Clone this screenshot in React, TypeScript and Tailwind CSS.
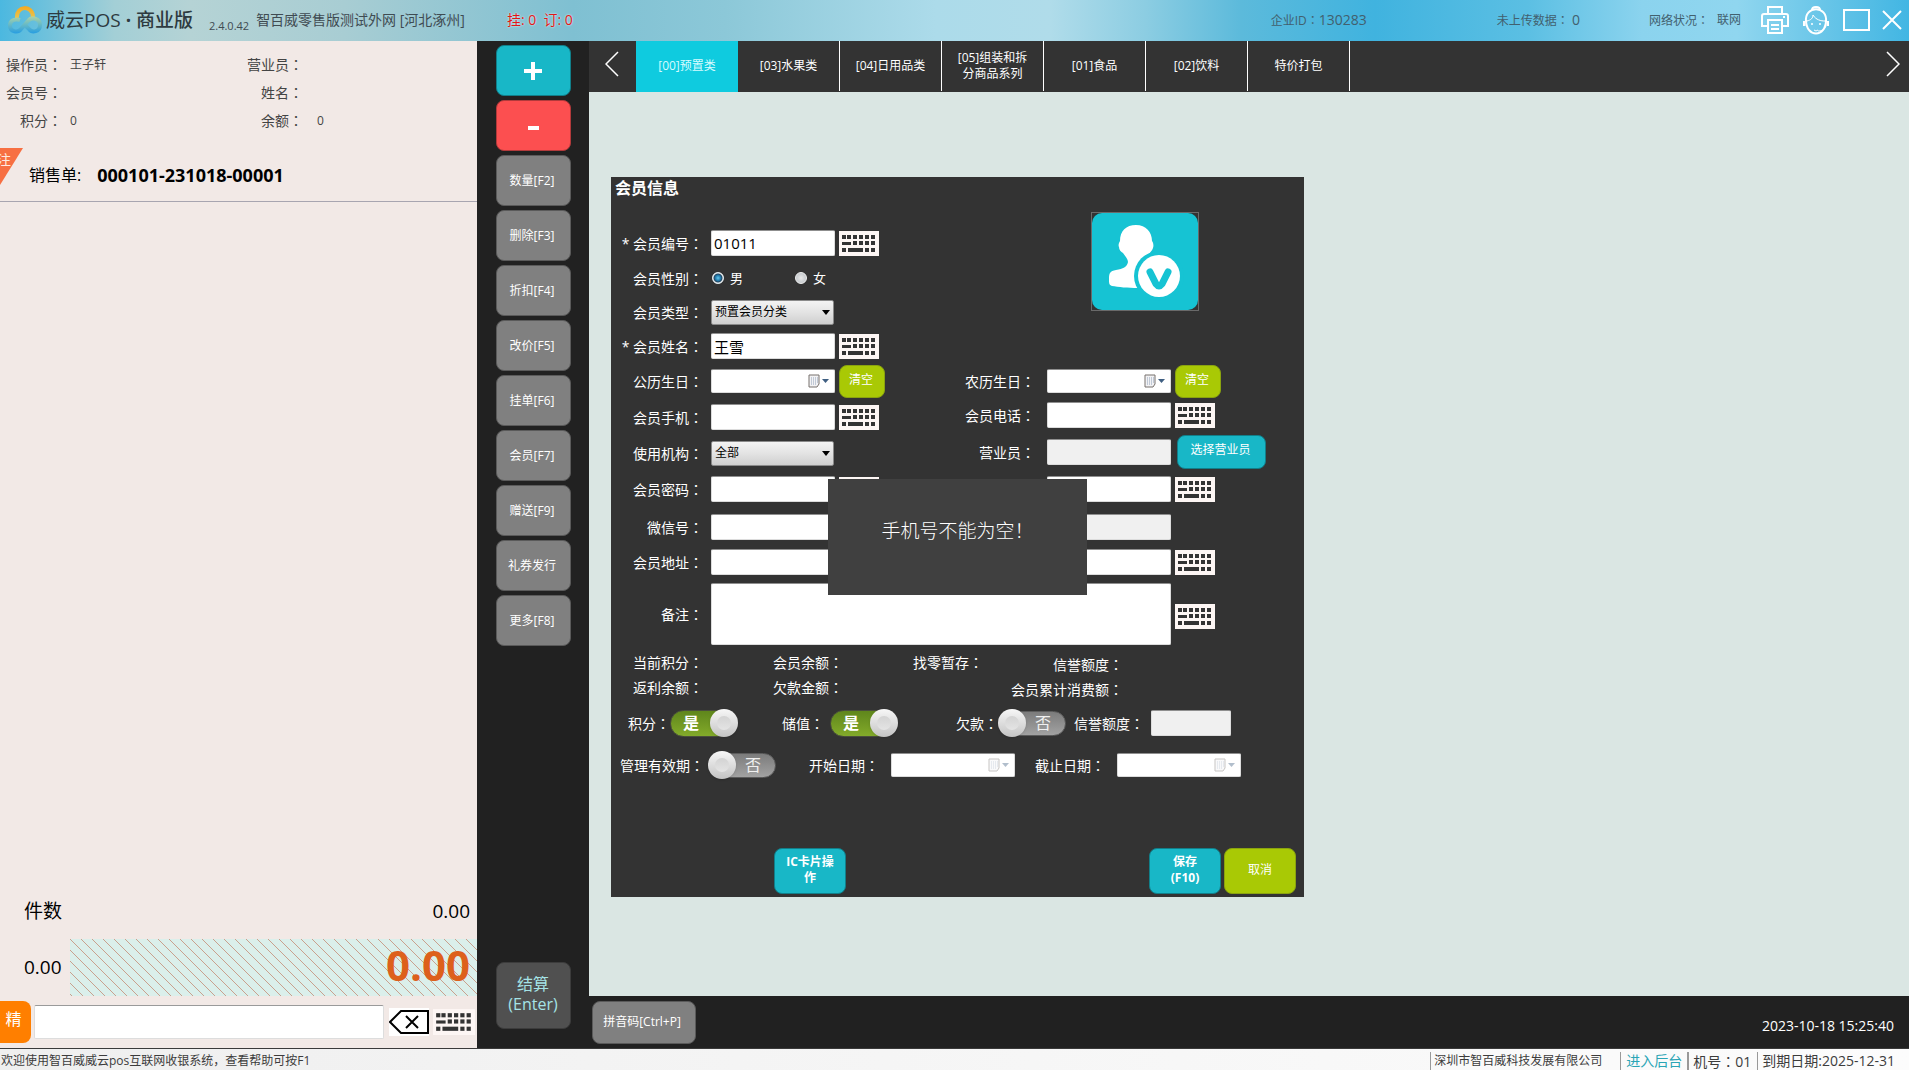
import type { ReactNode } from 'react';

function Colon() {
  return <span className="font-['Noto_Sans_CJK_TC','Noto_Sans_CJK_SC',sans-serif]">：</span>;
}

function KeyboardIcon({ className = '' }: { className?: string }) {
  const dark = '#333333';
  return (
    <svg viewBox="0 0 40 25" className={className} preserveAspectRatio="none" aria-hidden="true">
      <rect width="40" height="25" fill="#fdf6f4" />
      <g fill={dark}>
        {[3, 8, 14, 20, 26, 32].map((x) => (
          <rect key={x} x={x} y="4" width="4" height="4" />
        ))}
        <rect x="3" y="11" width="9" height="3" />
        {[14, 20, 26, 32].map((x) => (
          <rect key={x} x={x} y="10" width="4" height="4" />
        ))}
        <rect x="3" y="17" width="4" height="4" />
        <rect x="9" y="17" width="15" height="4" />
        <rect x="26" y="17" width="4" height="4" />
        <rect x="32" y="17" width="4" height="4" />
      </g>
    </svg>
  );
}

function KeyboardButton() {
  return (
    <button type="button" aria-label="软键盘" className="h-[25px] w-10 shrink-0">
      <KeyboardIcon className="block h-full w-full" />
    </button>
  );
}

function Logo() {
  return (
    <svg viewBox="0 0 34 28" className="h-7 w-[34px]" fill="none" aria-hidden="true">
      <defs>
        <linearGradient id="loop" x1="0" y1="9" x2="0" y2="27" gradientUnits="userSpaceOnUse">
          <stop offset="0" stopColor="#b9d6a0" />
          <stop offset="0.5" stopColor="#6cbcc4" />
          <stop offset="1" stopColor="#2b9fe0" />
        </linearGradient>
        <linearGradient id="arch" x1="0" y1="0" x2="0" y2="16" gradientUnits="userSpaceOnUse">
          <stop offset="0" stopColor="#f6a81c" />
          <stop offset="1" stopColor="#e4cf63" />
        </linearGradient>
      </defs>
      <path d="M9 12 C8 -1 25 -1 25 11" stroke="url(#arch)" strokeWidth="4" />
      <path
        d="M12 14 C5 12 2 16 2 19.500 C2 26 10 27 13 23 L20 15 C24 10 32 13 32 19 C32 26 24 27 21 23 L18 20"
        stroke="url(#loop)"
        strokeWidth="4"
      />
    </svg>
  );
}

function PrinterIcon() {
  return (
    <svg viewBox="0 0 28 28" className="h-7 w-7" fill="none" stroke="white" strokeWidth="2" aria-hidden="true">
      <path d="M7 8 V1 H21 V8" />
      <path d="M6 20 H1 V10 Q1 8 3 8 H25 Q27 8 27 10 V20 H22" />
      <rect x="7" y="14" width="14" height="13" />
      <path d="M10 19 H18 M10 23 H18 M22 11 H24" />
    </svg>
  );
}

function ServiceIcon() {
  return (
    <svg viewBox="0 0 26 29" className="h-[29px] w-[26px]" fill="none" stroke="white" strokeWidth="2" aria-hidden="true">
      <path d="M9 4 Q9 1 13 1 Q17 1 17 4" />
      <path d="M3 16 C1 -1 25 -1 23 16" />
      <path d="M3 14 C3 32 23 32 23 14" />
      <path d="M4 15 C8 14 10 12 10 9 C13 14 18 15 22 15" strokeWidth="1" />
      <path d="M1 15 V20 M25 15 V20" strokeWidth="3" />
      <path d="M23 20 C22 24 18 25 15 25" strokeWidth="1" />
      <circle cx="9" cy="18" r="1" fill="white" stroke="none" />
      <circle cx="17" cy="18" r="1" fill="white" stroke="none" />
      <path d="M11 24 Q13 26 15 24" strokeWidth="1" />
    </svg>
  );
}

function AvatarPicture() {
  return (
    <svg viewBox="0 0 106 97" className="block h-full w-full" aria-label="会员头像" role="img">
      <rect width="106" height="97" rx="10" fill="#16c3d3" />
      <path
        d="M44 12 C54 12 60 19 60 28 C61 29 62 32 61 35 C60 38 58 39 58 40 C56 45 54 46 53 48 C53 54 56 58 66 60 L66 74 L46 75 C36 75 26 74 20 73 C17 72 17 70 17 66 C17 60 18 58 24 57 C31 56 35 54 36 49 C36 46 33 43 31 40 C29 39 27 37 27 34 C26 32 27 30 28 28 C28 18 34 12 44 12 Z"
        fill="white"
      />
      <circle cx="67" cy="63" r="25" fill="#16c3d3" />
      <circle cx="67" cy="63" r="21" fill="white" />
      <path d="M58 59 L64 71 Q67 75 70 71 L76 59" fill="none" stroke="#16c3d3" strokeWidth="7" strokeLinecap="round" />
    </svg>
  );
}

function Field({
  id,
  label,
  value = '',
  disabled = false,
  className = 'w-[124px]',
}: {
  id: string;
  label: string;
  value?: string;
  disabled?: boolean;
  className?: string;
}) {
  return (
    <input
      id={id}
      aria-label={label}
      defaultValue={value}
      disabled={disabled}
      className={`${className} h-[26px] shrink-0 rounded-xs border border-t-[#8f8f8f] border-[#dcdcdc] bg-white px-0.5 text-[15px] leading-5 text-black outline-none disabled:bg-[#f0f0f0]`}
    />
  );
}

function DateField({ id, label, disabled = false }: { id: string; label: string; disabled?: boolean }) {
  return (
    <div className="flex h-6 w-[124px] shrink-0 items-center rounded-xs border border-t-[#8f8f8f] border-[#dcdcdc] bg-white pr-1">
      <input id={id} aria-label={label} disabled={disabled} className="h-5 min-w-0 flex-1 px-0.5 text-xs text-black outline-none" />
      <button type="button" aria-label={`${label}选择`} disabled={disabled} className="disabled:opacity-40">
        <svg viewBox="0 0 22 14" className="h-3.5 w-[22px]" aria-hidden="true">
          <path d="M1 1 H11 V10 L9 13 H1 Z" fill="#f2f2f4" stroke="#77706c" />
          <path d="M3 4 H10 M3 6 H10 M3 8 H10 M3 10 H8" stroke="#8fa0b8" strokeDasharray="1 1" />
          <path d="M14 5 H21 L17.500 9 Z" fill="#3f5f82" />
        </svg>
      </button>
    </div>
  );
}

function Select({ id, value }: { id: string; value: string }) {
  return (
    <div className="relative w-[123px] shrink-0">
      <select
        id={id}
        defaultValue={value}
        className="block h-[25px] w-full appearance-none rounded-xs border border-[#8a8a8a] bg-linear-to-b from-[#f3f3f3] via-[#e3e3e3] to-[#cfcfcf] pl-[3px] text-xs text-black outline-none"
      >
        <option>{value}</option>
      </select>
      <svg viewBox="0 0 8 5" className="pointer-events-none absolute top-2.5 right-1 h-[5px] w-2" aria-hidden="true">
        <path d="M0 0 H8 L4 5 Z" fill="black" />
      </svg>
    </div>
  );
}

function Toggle({ id, on }: { id: string; on: boolean }) {
  return (
    <div className="relative flex h-[29px] w-[68px] shrink-0 items-center">
      {on ? (
        <div className="flex h-[27px] w-16 items-center rounded-full border border-[#4a4f3c] bg-linear-to-b from-[#5f861c] to-[#83ab2a] pl-3 text-base font-bold text-white">
          是
        </div>
      ) : (
        <div className="ml-1 flex h-[25px] w-16 items-center rounded-full border border-[#5c5c5c] bg-linear-to-b from-[#7c7c7c] to-[#a2a2a2] pl-8 text-base text-[#f0f0f0]">
          否
        </div>
      )}
      <span
        className={`absolute top-0 flex size-7 items-center justify-center rounded-full bg-linear-to-b from-[#f7f7f7] to-[#c4c4c4] shadow ${on ? 'right-0' : 'left-0'}`}
      >
        <span className="size-3.5 rounded-full bg-linear-to-b from-[#d3d3d3] to-[#e4e4e4]" />
      </span>
      <input id={id} type="checkbox" role="switch" defaultChecked={on} className="absolute inset-0 opacity-0" />
    </div>
  );
}

function Row({
  id,
  label,
  required = false,
  height,
  children,
  right,
}: {
  id?: string;
  label: string;
  required?: boolean;
  height: string;
  children: ReactNode;
  right?: ReactNode;
}) {
  return (
    <div className={`flex items-center ${height}`}>
      <div className="flex w-[326px] shrink-0 items-center gap-1">
        <label htmlFor={id} className="w-24 shrink-0 pr-1 text-right">
          {required ? '* ' : ''}
          {label}
          <Colon />
        </label>
        {children}
      </div>
      {right}
    </div>
  );
}

function RightLabel({ id, label }: { id: string; label: string }) {
  return (
    <label htmlFor={id} className="mr-2 w-[98px] shrink-0 text-right">
      {label}
      <Colon />
    </label>
  );
}

function ClearButton() {
  return (
    <button type="button" className="h-[33px] w-[46px] shrink-0 rounded-lg border border-[#8aa30f] bg-[#a9c905] pr-0.5 pb-0.5 text-xs text-white">
      清空
    </button>
  );
}

const functionKeys = ['数量[F2]', '删除[F3]', '折扣[F4]', '改价[F5]', '挂单[F6]', '会员[F7]', '赠送[F9]', '礼券发行', '更多[F8]'];
const categories = ['[03]水果类', '[04]日用品类', '[05]组装和拆分商品系列', '[01]食品', '[02]饮料', '特价打包'];

function Header() {
  return (
    <header className="flex h-[41px] shrink-0 items-center bg-[linear-gradient(90deg,#4bb8e0_0%,#a3cfd6_6%,#b5d3d5_10%,#a8cdd3_18%,#7fc0d2_30%,#8cc8d8_38%,#acdbea_49%,#b0dcea_55%,#8ccde2_60%,#5cbadb_65%,#40b3df_72%,#5bbfe3_80%,#8bd3ee_86%,#90d6ef_91%,#5cc0e6_97%,#42b6e3_100%)] pb-px text-[#3f4b52]">
      <div className="flex w-[201px] shrink-0 items-center gap-1 pl-2">
        <Logo />
        <h1 className="text-[19px] leading-7 whitespace-nowrap text-[#2d3a40]">
          威云POS<span className="mx-[5px] font-bold">·</span>
          <span className="font-medium">商业版</span>
        </h1>
      </div>
      <span className="ml-2 pt-3 text-[11px] leading-4">2.4.0.42</span>
      <span className="ml-[7px] text-sm whitespace-nowrap">智百威零售版测试外网 [河北涿州]</span>
      <span className="ml-[42px] text-sm whitespace-nowrap text-[#e01818] [text-shadow:0_0_2px_white]">挂: 0&nbsp; 订: 0</span>
      <div className="ml-auto flex items-center text-xs whitespace-nowrap text-[#42606e]">
        <span>
          企业ID
          <Colon />
          <span className="text-sm">130283</span>
        </span>
        <span className="ml-[130px]">
          未上传数据
          <Colon /> <span className="text-sm">0</span>
        </span>
        <span className="ml-[69px]">
          网络状况
          <Colon />
        </span>
        <span className="ml-2">联网</span>
        <div className="mr-[7px] ml-5 flex items-center">
          <button type="button" aria-label="打印">
            <PrinterIcon />
          </button>
          <button type="button" aria-label="客服" className="ml-3.5">
            <ServiceIcon />
          </button>
          <button type="button" aria-label="最大化" className="ml-3.5 h-[22px] w-[27px] border-2 border-white" />
          <button type="button" aria-label="关闭" className="ml-3">
            <svg viewBox="0 0 20 20" className="size-5" stroke="white" strokeWidth="2" aria-hidden="true">
              <path d="M1 1 L19 19 M19 1 L1 19" />
            </svg>
          </button>
        </div>
      </div>
    </header>
  );
}

function InfoItem({ label, value }: { label: string; value?: string }) {
  return (
    <div className="flex h-7 items-center gap-2">
      <span className="w-[62px] shrink-0 text-right">
        {label}
        <Colon />
      </span>
      <span className="pt-0.5 text-xs">{value}</span>
    </div>
  );
}

function SalesPanel() {
  return (
    <section className="flex w-[477px] shrink-0 flex-col bg-[#f2e9e6] text-black">
      <div className="relative h-[161px] shrink-0 border-b border-[#a8a5b0] pt-[9px] text-sm text-[#444444]">
        <div className="grid grid-cols-[241px_1fr]">
          <InfoItem label="操作员" value="王子轩" />
          <InfoItem label="营业员" />
          <InfoItem label="会员号" />
          <InfoItem label="姓名" />
          <InfoItem label="积分" value="0" />
          <div className="flex h-7 items-center gap-3.5">
            <span className="w-[62px] shrink-0 text-right">
              余额
              <Colon />
            </span>
            <span className="pt-0.5 text-xs">0</span>
          </div>
        </div>
        <div className="mt-4 flex h-[50px] items-center gap-4 pl-[29px] text-black">
          <span className="text-base">销售单:</span>
          <strong className="text-lg">000101-231018-00001</strong>
        </div>
        <div className="absolute top-[107px] left-0 h-[37px] w-[23px] overflow-hidden bg-[#f76f42] text-[#ffe9df] [clip-path:polygon(0_0,100%_0,0_100%)]">
          <span className="absolute top-0 right-3 text-sm leading-6">注</span>
        </div>
      </div>
      <div className="flex-1" />
      <div className="flex h-14 items-center justify-between pr-[7px] pl-6 text-[19px]">
        <span>件数</span>
        <span>0.00</span>
      </div>
      <div className="flex h-[57px] items-center">
        <span className="w-[70px] pl-6 text-[19px]">0.00</span>
        <div className="flex h-full flex-1 items-center justify-end bg-[#dbefeb] bg-[linear-gradient(45deg,transparent_46%,#c9a08e_48%,#c9a08e_52%,transparent_54%)] bg-[length:11px_11px] pr-[7px] pb-1.5 text-[42px] leading-none font-bold text-[#dd601c]">
          0.00
        </div>
      </div>
      <div className="flex h-[52px] items-center pb-px">
        <button type="button" className="h-[42px] w-[31px] rounded-r-lg bg-[#ff7f00] pr-1 pb-1.5 text-base text-white">
          精
        </button>
        <input aria-label="商品条码" className="ml-[3px] h-[34px] min-w-0 flex-1 rounded-xs border border-t-[#9a9a9a] border-[#dddddd] bg-white px-1 text-base outline-none" />
        <button type="button" aria-label="退格" className="ml-[5px]">
          <svg viewBox="0 0 40 28" className="h-7 w-10" fill="white" stroke="black" strokeWidth="2" aria-hidden="true">
            <rect width="40" height="28" stroke="none" />
            <path d="M12 3 H39 V25 H12 L1 14 Z" />
            <path d="M17 8 L29 20 M29 8 L17 20" />
          </svg>
        </button>
        <button type="button" aria-label="软键盘" className="mr-0.5 ml-1 h-[26px] w-[42px]">
          <KeyboardIcon className="block h-full w-full" />
        </button>
      </div>
    </section>
  );
}

function KeyColumn() {
  return (
    <nav className="flex w-28 shrink-0 flex-col items-center gap-1 bg-[#212121] pt-1 pb-[19px]">
      <button type="button" className="flex h-[51px] w-[75px] items-center justify-center rounded-lg border border-[#117f8a] bg-[#18b7c7]" aria-label="增加">
        <svg viewBox="0 0 18 18" className="size-[18px]" fill="white" aria-hidden="true">
          <path d="M7 0 H11 V7 H18 V11 H11 V18 H7 V11 H0 V7 H7 Z" />
        </svg>
      </button>
      <button type="button" className="flex h-[51px] w-[75px] items-center justify-center rounded-lg border border-[#b23a3b] bg-[#fc4f50] text-white" aria-label="减少">
        <span className="mt-1 h-1 w-[11px] bg-white" />
      </button>
      {functionKeys.map((key) => (
        <button key={key} type="button" className="h-[51px] w-[75px] rounded-lg border border-[#5a5a5a] bg-[#808080] pr-0.5 text-xs text-white">
          {key}
        </button>
      ))}
      <button type="button" className="mt-auto h-[67px] w-[75px] rounded-lg border border-[#3c3c3c] bg-[#505050] pb-1 text-base leading-5 text-[#a5e3e6]">
        结算
        <br />
        (Enter)
      </button>
    </nav>
  );
}

function CategoryTabs() {
  return (
    <div className="flex h-[51px] shrink-0 bg-[#333333] text-xs text-white">
      <button type="button" aria-label="上一页" className="flex w-[47px] shrink-0 items-center justify-center pr-0.5 pb-1.5">
        <svg viewBox="0 0 14 26" className="h-[26px] w-3.5" fill="none" stroke="white" strokeWidth="1.500" aria-hidden="true">
          <path d="M13 1 L1 13 L13 25" />
        </svg>
      </button>
      <button type="button" className="w-[102px] shrink-0 bg-[#0fcbdf] pb-px text-[#d6fbff]">
        [00]预置类
      </button>
      {categories.map((name) => (
        <button key={name} type="button" className="mb-px w-[102px] shrink-0 border-r border-white px-3 leading-4">
          {name}
        </button>
      ))}
      <button type="button" aria-label="下一页" className="ml-auto flex items-center pr-[9px] pb-1.5">
        <svg viewBox="0 0 14 26" className="h-[26px] w-3.5" fill="none" stroke="white" strokeWidth="1.500" aria-hidden="true">
          <path d="M1 1 L13 13 L1 25" />
        </svg>
      </button>
    </div>
  );
}

function MemberDialog() {
  return (
    <form aria-label="会员信息" className="relative mt-[85px] ml-[22px] flex w-[693px] flex-col bg-[#333333] text-sm leading-5 text-white">
      <h2 className="h-[49px] pl-1 text-base leading-[22px] font-bold">会员信息</h2>

      <div className="flex">
        <div className="w-[480px]">
          <Row id="code" label="会员编号" required height="h-[34px]">
            <Field id="code" label="会员编号" value="01011" />
            <KeyboardButton />
          </Row>
          <Row label="会员性别" height="h-9">
            <label className="flex w-20 items-center gap-1.5 pl-px text-[13px]">
              <input
                type="radio"
                name="sex"
                defaultChecked
                className="size-3 appearance-none rounded-full border border-[#dfe6ea] bg-[#e8eef2] bg-[radial-gradient(circle,#5fc8ee_0px,#1c6ea0_3px,#24435a_4px,#e6ecf0_5px)]"
              />
              男
            </label>
            <label className="flex items-center gap-1.5 text-[13px]">
              <input type="radio" name="sex" className="size-3 appearance-none rounded-full border border-[#f1f1f1] bg-[radial-gradient(circle,#e8e8e8_0px,#bfc4c8_6px)]" />
              女
            </label>
          </Row>
          <Row id="kind" label="会员类型" height="h-8">
            <Select id="kind" value="预置会员分类" />
          </Row>
          <Row id="name" label="会员姓名" required height="h-9">
            <Field id="name" label="会员姓名" value="王雪" />
            <KeyboardButton />
          </Row>
        </div>
        <div className="-mt-3.5 h-[99px] w-[108px] border border-[#6a6a6a]">
          <AvatarPicture />
        </div>
      </div>

      <Row
        id="solar"
        label="公历生日"
        height="h-[34px]"
        right={
          <div className="flex items-center gap-1">
            <RightLabel id="lunar" label="农历生日" />
            <DateField id="lunar" label="农历生日" />
            <ClearButton />
          </div>
        }
      >
        <DateField id="solar" label="公历生日" />
        <ClearButton />
      </Row>
      <Row
        id="mobile"
        label="会员手机"
        height="h-[38px]"
        right={
          <div className="flex items-center gap-1 pb-1">
            <RightLabel id="phone" label="会员电话" />
            <Field id="phone" label="会员电话" />
            <KeyboardButton />
          </div>
        }
      >
        <Field id="mobile" label="会员手机" />
        <KeyboardButton />
      </Row>
      <Row
        id="branch"
        label="使用机构"
        height="h-[34px]"
        right={
          <div className="flex items-center gap-1 pb-0.5">
            <RightLabel id="clerk" label="营业员" />
            <Field id="clerk" label="营业员" disabled />
            <button type="button" className="ml-0.5 h-[34px] w-[89px] rounded-lg border border-[#117f8a] bg-[#18b7c7] pr-0.5 pb-1 text-xs text-white">
              选择营业员
            </button>
          </div>
        }
      >
        <Select id="branch" value="全部" />
      </Row>
      <Row
        id="password"
        label="会员密码"
        height="h-[38px]"
        right={
          <div className="ml-[110px] flex items-center gap-1">
            <Field id="confirm" label="确认密码" />
            <KeyboardButton />
          </div>
        }
      >
        <Field id="password" label="会员密码" />
        <KeyboardButton />
      </Row>
      <Row
        id="wechat"
        label="微信号"
        height="h-[38px]"
        right={
          <div className="ml-[110px] flex">
            <Field id="level" label="会员等级" disabled />
          </div>
        }
      >
        <Field id="wechat" label="微信号" />
      </Row>
      <div className="flex h-8 items-center gap-1">
        <label htmlFor="address" className="w-24 shrink-0 pr-1 text-right">
          会员地址
          <Colon />
        </label>
        <Field id="address" label="会员地址" className="w-[460px]" />
        <KeyboardButton />
      </div>
      <div className="flex items-center gap-1 pt-[5px]">
        <label htmlFor="remark" className="w-24 shrink-0 pr-1 text-right">
          备注
          <Colon />
        </label>
        <textarea id="remark" className="h-[62px] w-[460px] resize-none rounded-xs border border-t-[#8f8f8f] border-[#dcdcdc] bg-white p-0.5 text-black outline-none" />
        <div className="flex pt-1">
          <KeyboardButton />
        </div>
      </div>

      <div className="mt-[7px] grid grid-cols-[140px_140px_140px_1fr] gap-y-0.5 pl-[22px]">
        <span>
          当前积分
          <Colon />
        </span>
        <span>
          会员余额
          <Colon />
        </span>
        <span>
          找零暂存
          <Colon />
        </span>
        <span className="pt-0.5">
          信誉额度
          <Colon />
        </span>
        <span>
          返利余额
          <Colon />
        </span>
        <span>
          欠款金额
          <Colon />
        </span>
        <span className="col-span-2 pt-0.5 pl-[98px]">
          会员累计消费额
          <Colon />
        </span>
      </div>

      <div className="mt-[7px] flex h-8 items-center pl-[17px]">
        <label htmlFor="points">
          积分
          <Colon />
        </label>
        <Toggle id="points" on />
        <label htmlFor="stored" className="ml-11">
          储值
          <Colon />
        </label>
        <span className="ml-1.5" />
        <Toggle id="stored" on />
        <label htmlFor="debt" className="ml-[58px]">
          欠款
          <Colon />
        </label>
        <Toggle id="debt" on={false} />
        <label htmlFor="credit" className="ml-2">
          信誉额度
          <Colon />
        </label>
        <span className="ml-[7px]" />
        <Field id="credit" label="信誉额度" disabled className="w-20" />
      </div>
      <div className="mt-2.5 flex h-8 items-center pl-[9px]">
        <label htmlFor="validity">
          管理有效期
          <Colon />
        </label>
        <span className="ml-1" />
        <Toggle id="validity" on={false} />
        <label htmlFor="start" className="mr-3 ml-[33px]">
          开始日期
          <Colon />
        </label>
        <DateField id="start" label="开始日期" disabled />
        <label htmlFor="end" className="mr-3 ml-5">
          截止日期
          <Colon />
        </label>
        <DateField id="end" label="截止日期" disabled />
      </div>

      <div className="mt-[67px] mb-[3px] flex pr-2 pl-[163px] text-xs leading-4 text-white">
        <button type="button" className="h-[46px] w-[72px] rounded-lg border border-[#117f8a] bg-[#18b7c7] px-2 pb-0.5 font-bold">
          IC卡片操作
        </button>
        <button type="button" className="ml-auto h-[46px] w-[72px] rounded-lg border border-[#117f8a] bg-[#18b7c7] px-2 pb-0.5 font-bold">
          保存
          <br />
          (F10)
        </button>
        <button type="button" className="ml-[3px] h-[46px] w-[72px] rounded-lg border border-[#8aa30f] bg-[#a9c905] pb-0.5">
          取消
        </button>
      </div>

      <div role="alert" className="absolute top-[302px] left-[217px] flex h-[116px] w-[259px] items-center justify-center bg-[#404040] pb-3 text-[19px] font-light">
        手机号不能为空！
      </div>
    </form>
  );
}

function StatusBar() {
  return (
    <footer className="flex h-[22px] shrink-0 items-start overflow-hidden border-t border-[#3a3a3a] bg-linear-to-r from-[#efefef] to-[#fcfcfc] text-xs whitespace-nowrap text-[#3c3c3c]">
      <span className="pt-[3px] pl-px leading-[18px]">欢迎使用智百威威云pos互联网收银系统，查看帮助可按F1</span>
      <div className="mt-[3px] ml-auto flex items-start pr-3.5 text-sm leading-[18px]">
        <span className="border-l border-[#999999] pr-[18px] pl-[3px] text-xs leading-[18px]">深圳市智百威科技发展有限公司</span>
        <span className="border-l border-[#999999] px-[5px]">
          <a href="#backend" className="text-[#2aa5b5]">
            进入后台
          </a>
        </span>
        <span className="border-l-2 border-[#999999] pr-1.5 pl-1">
          机号
          <Colon />
          01
        </span>
        <span className="border-l border-[#999999] pl-1">到期日期:2025-12-31</span>
      </div>
    </footer>
  );
}

export default function App() {
  return (
    <div className="flex h-screen flex-col overflow-hidden bg-[#dae6e3] font-['Open_Sans','Noto_Sans_CJK_SC',sans-serif]">
      <Header />
      <div className="flex min-h-0 flex-1">
        <SalesPanel />
        <KeyColumn />
        <main className="flex min-w-0 flex-1 flex-col">
          <CategoryTabs />
          <div className="min-h-0 flex-1 bg-[#dae6e3]">
            <MemberDialog />
          </div>
          <div className="flex h-[52px] shrink-0 items-center justify-between bg-[#212121] pr-[15px] pl-[3px] text-white">
            <button type="button" className="h-[43px] w-[104px] rounded-lg border border-[#5a5a5a] bg-[#808080] pr-1 text-xs">
              拼音码[Ctrl+P]
            </button>
            <time className="pt-2 text-sm">2023-10-18 15:25:40</time>
          </div>
        </main>
      </div>
      <StatusBar />
    </div>
  );
}
